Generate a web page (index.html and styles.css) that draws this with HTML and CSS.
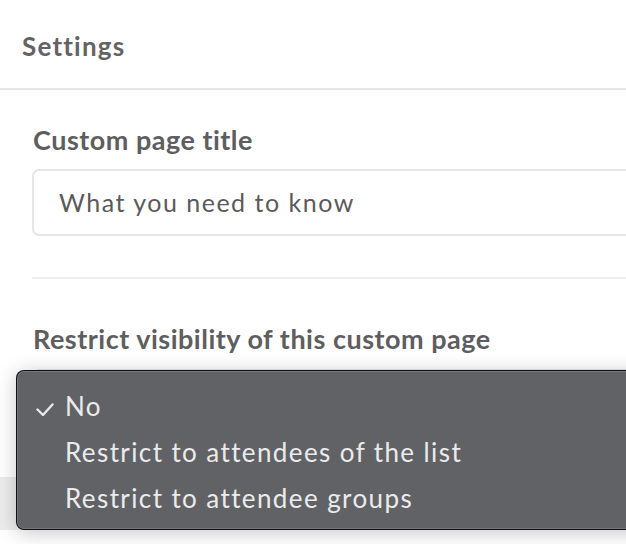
FILE: index.html
```html
<!DOCTYPE html>
<html lang="en">
<head>
<meta charset="utf-8">
<title>Settings</title>
<link rel="stylesheet" href="styles.css">
</head>
<body>
<div class="panel">
  <header class="panel-header">Settings</header>
  <section class="panel-body">
    <label class="field-label" for="title">Custom page title</label>
    <div class="text-input" id="title">What you need to know</div>
    <hr class="divider">
    <label class="field-label" for="restrict">Restrict visibility of this custom page</label>
    <div class="select-wrap">
      <div class="select-box" id="restrict" aria-label="No"></div>
      <ul class="menu">
        <li class="menu-item is-checked">
          <svg class="check" width="18" height="13" viewBox="0 0 18 13" aria-hidden="true"><polyline points="1.5,6.5 7,12 16.5,1.5" fill="none" stroke="#e8e8e9" stroke-width="2.4" stroke-linecap="round" stroke-linejoin="round"/></svg>
          No
        </li>
        <li class="menu-item">Restrict to attendees of the list</li>
        <li class="menu-item">Restrict to attendee groups</li>
      </ul>
    </div>
  </section>
  <footer class="panel-footer"></footer>
</div>
</body>
</html>
```

FILE: styles.css
```css
* { box-sizing: border-box; }

html, body {
  margin: 0;
  padding: 0;
  background: #ffffff;
  overflow: hidden;
}

body {
  font-family: "Lato", "Liberation Sans", sans-serif;
  color: #5e5e60;
}

.panel {
  min-height: 544px;
}

.panel-header {
  height: 90px;
  padding: 33px 22px 0;
  font-size: 26px;
  line-height: 26px;
  font-weight: 700;
  letter-spacing: 1.2px;
  color: #636365;
  border-bottom: 2px solid #e7e7e7;
}

.panel-body {
  padding: 34px 0 0 32px;
}

.field-label {
  display: block;
  font-size: 27px;
  line-height: 32px;
  font-weight: 700;
  letter-spacing: 0.5px;
  color: #5e5e60;
  margin: 0 0 13px 1px;
}

.text-input {
  height: 67px;
  margin-right: -20px;
  border: 2px solid #e6e6e6;
  border-radius: 7px;
  padding: 0 0 0 25px;
  display: flex;
  align-items: center;
  font-size: 25px;
  line-height: 25px;
  letter-spacing: 1.5px;
  color: #5a5a5c;
}

.divider {
  border: 0;
  height: 2px;
  background: #ececec;
  margin: 41px 0 44px 0;
}

.select-wrap {
  position: relative;
  margin-top: 14px;
}

.select-box {
  height: 67px;
  margin-right: -20px;
  border: 2px solid #e6e6e6;
  border-radius: 7px;
}

.panel-footer {
  margin-top: 41px;
  height: 53px;
  background: #ececec;
}

.menu {
  position: absolute;
  left: -16px;
  top: 1px;
  right: -40px;
  height: 160px;
  margin: 0;
  padding: 12px 0 0 0;
  list-style: none;
  background: #616266;
  border: 1px solid rgba(10, 10, 12, 0.92);
  border-radius: 8px;
  box-shadow:
    inset 0 0 0 1px rgba(255, 255, 255, 0.13),
    0 3px 20px rgba(0, 0, 0, 0.22);
  z-index: 10;
}

.menu-item {
  position: relative;
  height: 46px;
  line-height: 46px;
  padding-left: 48px;
  font-size: 26px;
  letter-spacing: 1.4px;
  color: #ebebec;
  white-space: nowrap;
}

.check {
  position: absolute;
  left: 19px;
  top: 20px;
}
```
